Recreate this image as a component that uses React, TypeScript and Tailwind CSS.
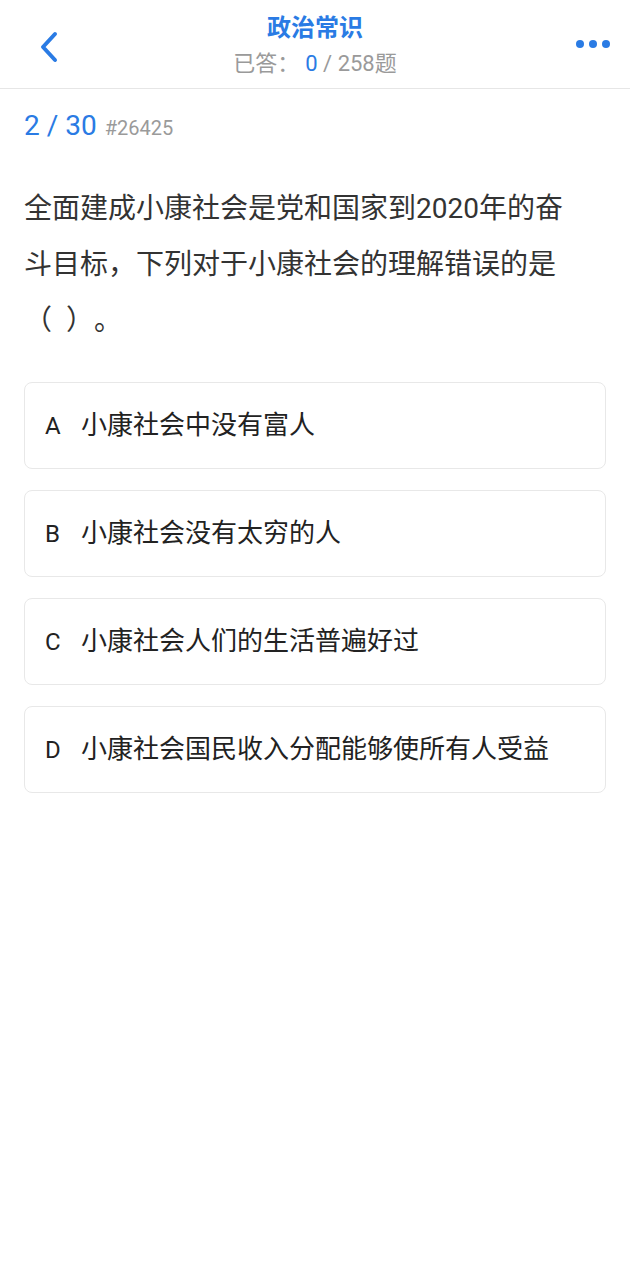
import { useState } from 'react';

const options = [
  { key: 'A', text: '小康社会中没有富人' },
  { key: 'B', text: '小康社会没有太穷的人' },
  { key: 'C', text: '小康社会人们的生活普遍好过' },
  { key: 'D', text: '小康社会国民收入分配能够使所有人受益' },
];

const font = { fontFamily: 'Roboto, "Noto Sans CJK SC", sans-serif' };

export default function App() {
  const [selected, setSelected] = useState<string | null>(null);

  return (
    <div className="min-h-[1280px] w-[630px] bg-white [text-spacing-trim:space-all]" style={font}>
      {/* header */}
      <div className="relative flex h-[89px] flex-col items-center border-b border-[#e6e6e6]">
        <button className="absolute left-[34px] top-[28px] flex h-[38px] w-[30px] items-center justify-center">
          <svg width="20" height="32" viewBox="0 0 20 32" fill="none">
            <path d="M16 3 L4 16 L16 29" stroke="#2a7be4" strokeWidth="4" strokeLinecap="round" strokeLinejoin="round" />
          </svg>
        </button>
        <div className="mt-[12px] text-[24px] font-bold leading-[32px] text-[#2a7be4]">政治常识</div>
        <div className="mt-[5px] text-[22px] leading-[30px] text-[#9a9a9a]">
          已答：<span className="ml-[6px] text-[#2a7be4]">0</span> / 258题
        </div>
        <button className="absolute right-[20px] top-[40px] flex items-center gap-[5px]">
          <span className="block h-[8px] w-[8px] rounded-full bg-[#2a7be4]" />
          <span className="block h-[8px] w-[8px] rounded-full bg-[#2a7be4]" />
          <span className="block h-[8px] w-[8px] rounded-full bg-[#2a7be4]" />
        </button>
      </div>

      <div className="px-[24px]">
        {/* progress */}
        <div className="mt-[19px] flex items-baseline gap-[8px]">
          <span className="text-[28px] leading-[36px] text-[#2a7be4]">2 / 30</span>
          <span className="text-[20px] text-[#9a9a9a]">#26425</span>
        </div>

        {/* question */}
        <p className="mt-[37px] w-[550px] text-[28px] leading-[56px] text-[#333333]">
          全面建成小康社会是党和国家到2020年的奋斗目标，下列对于小康社会的理解错误的是（{'\u00a0\u00a0'}）。
        </p>

        {/* options */}
        <div className="mt-[33px] flex flex-col gap-[21px]">
          {options.map((o) => (
            <button
              key={o.key}
              onClick={() => setSelected(o.key)}
              className={`flex h-[87px] w-full items-center rounded-[8px] border px-[20px] text-left ${
                selected === o.key ? 'border-[#2a7be4] bg-[#f2f7fe]' : 'border-[#e8e8e8] bg-white'
              }`}
            >
              <span className="w-[36px] text-[24px] text-[#222222]">{o.key}</span>
              <span className="text-[26px] text-[#222222]">{o.text}</span>
            </button>
          ))}
        </div>
      </div>
    </div>
  );
}
